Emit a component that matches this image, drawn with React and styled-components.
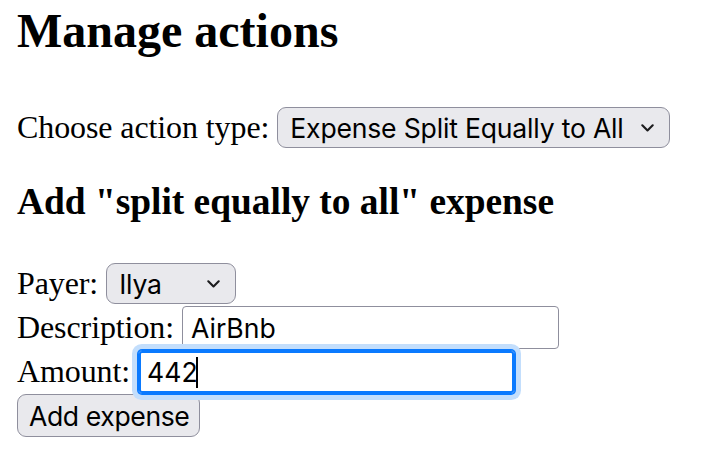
import styled, { createGlobalStyle } from 'styled-components';

const GlobalStyle = createGlobalStyle`
  body {
    margin: 0;
    background: #fff;
    color: #000;
    font-family: "Liberation Serif", "Times New Roman", serif;
    font-size: 32px;
  }
`;

const Chevron = () => (
  <svg width="13" height="8" viewBox="0 0 13 8" fill="none">
    <path
      d="M1.3 1.3 L6.5 6.5 L11.7 1.3"
      stroke="#1c1c1e"
      strokeWidth="2.1"
      strokeLinecap="round"
      strokeLinejoin="round"
    />
  </svg>
);

const Select = ({ value, width }) => (
  <SelectBox $width={width}>
    <SelectText>{value}</SelectText>
    <Chevron />
  </SelectBox>
);

export default function App() {
  return (
    <Page>
      <GlobalStyle />
      <Title>Manage actions</Title>
      <Row $top={49}>
        <Label>Choose action type:</Label>
        <Select value="Expense Split Equally to All" width={393} />
      </Row>
      <SubTitle>Add "split equally to all" expense</SubTitle>
      <Form>
        <Row $top={0}>
          <Label>Payer:</Label>
          <Select value="Ilya" width={130} />
        </Row>
        <Row $top={2}>
          <Label>Description:</Label>
          <Input defaultValue="AirBnb" />
        </Row>
        <Row $top={1}>
          <Label>Amount:</Label>
          <FocusWrap>
            <Input defaultValue="442" $focused />
            <Caret />
          </FocusWrap>
        </Row>
        <Button>Add expense</Button>
      </Form>
    </Page>
  );
}

const Page = styled.div`
  padding: 3px 16px 0 17px;
`;

const Title = styled.h1`
  margin: 0;
  font-size: 48px;
  line-height: 55px;
  font-weight: 700;
`;

const SubTitle = styled.h3`
  margin: 32px 0 0;
  font-size: 37.4px;
  line-height: 43px;
  font-weight: 700;
`;

const Form = styled.div`
  margin-top: 40px;
  display: flex;
  flex-direction: column;
  align-items: flex-start;
`;

const Row = styled.div`
  display: flex;
  align-items: baseline;
  gap: 8px;
  margin-top: ${(p) => p.$top}px;
`;

const Label = styled.span`
  line-height: 37px;
  white-space: nowrap;
  letter-spacing: -0.1px;
`;

const SelectBox = styled.div`
  box-sizing: border-box;
  width: ${(p) => p.$width}px;
  height: 41px;
  display: flex;
  align-items: center;
  justify-content: space-between;
  padding: 0 15px 0 12px;
  background: #e9e9ed;
  border: 1px solid #8f8f9d;
  border-radius: 9px;
  font-family: Inter, "Liberation Sans", sans-serif;
  font-size: 26.6px;
  color: #000;
`;

const SelectText = styled.span`
  white-space: nowrap;
  letter-spacing: -0.2px;
`;

const Input = styled.input`
  box-sizing: border-box;
  width: 377px;
  height: ${(p) => (p.$focused ? 44 : 43)}px;
  margin: 0;
  padding: 0 8px;
  background: #fff;
  border: 1px solid ${(p) => (p.$focused ? '#0a7aff' : '#8f8f9d')};
  border-radius: 4px;
  font-family: Inter, "Liberation Sans", sans-serif;
  font-size: 26.6px;
  color: #000;
  caret-color: transparent;
  outline: none;
  box-shadow: ${(p) =>
    p.$focused
      ? 'inset 0 0 0 2px #0a7aff, 0 0 0 1px #0a7aff, 0 0 0 6px #c3defc'
      : 'none'};
`;

const FocusWrap = styled.span`
  position: relative;
  display: inline-flex;
`;

const Caret = styled.span`
  position: absolute;
  left: 58px;
  top: 7px;
  width: 2px;
  height: 31px;
  background: #000;
`;

const Button = styled.button`
  box-sizing: border-box;
  width: 183px;
  height: 43px;
  margin: 0;
  padding: 0 11px;
  background: #e9e9ed;
  border: 1px solid #8f8f9d;
  border-radius: 9px;
  font-family: Inter, "Liberation Sans", sans-serif;
  font-size: 26.6px;
  letter-spacing: -0.4px;
  color: #000;
  white-space: nowrap;
`;
